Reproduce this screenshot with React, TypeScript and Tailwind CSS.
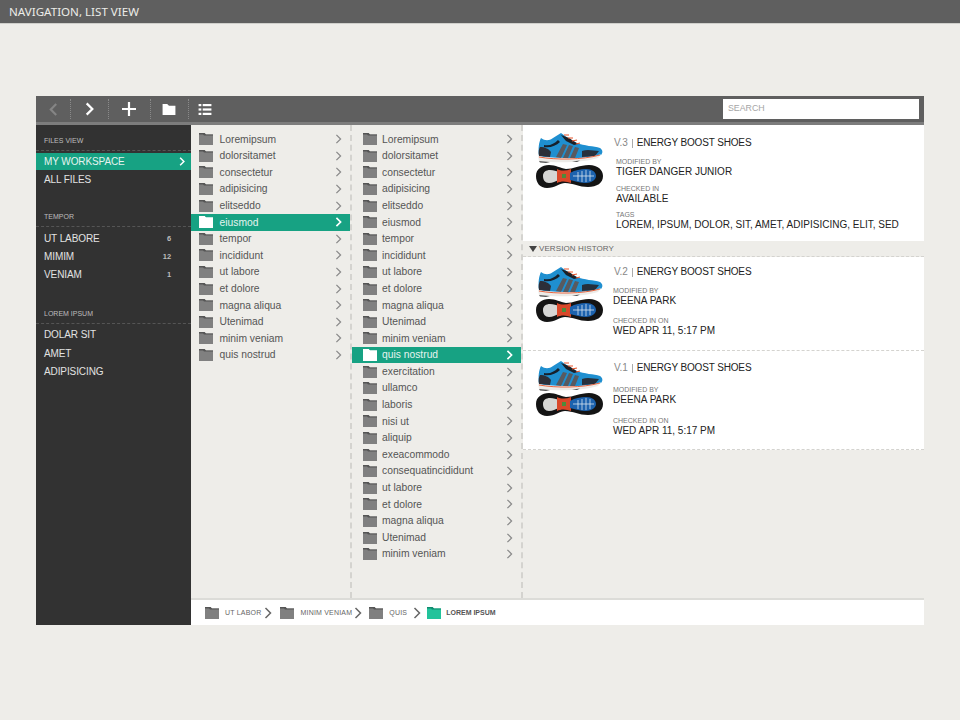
const COL_ONE = ['Loremipsum', 'dolorsitamet', 'consectetur', 'adipisicing', 'elitseddo', 'eiusmod', 'tempor', 'incididunt', 'ut labore', 'et dolore', 'magna aliqua', 'Utenimad', 'minim veniam', 'quis nostrud']
const COL_TWO = [...COL_ONE, 'exercitation', 'ullamco', 'laboris', 'nisi ut', 'aliquip', 'exeacommodo', 'consequatincididunt', 'ut labore', 'et dolore', 'magna aliqua', 'Utenimad', 'minim veniam']

function Chevron({ className, width = 2, left = false }: { className: string; width?: number; left?: boolean }) {
  return (
    <svg viewBox="0 0 8 12" className={className} fill="none" stroke="currentColor" strokeWidth={width}>
      <path d={left ? 'M6.5 1 L1.5 6 L6.5 11' : 'M1.5 1 L6.5 6 L1.5 11'} />
    </svg>
  )
}

function Folder({ body = '#808080', tab = '#555555', className = 'w-[14px] h-[12px]' }: { body?: string; tab?: string; className?: string }) {
  return (
    <svg viewBox="0 0 14 12" className={`shrink-0 ${className}`}>
      <path d="M0 0 H5.5 L7 1.5 H14 V12 H0 Z" fill={body} />
      <path d="M0 0 H5.5 L7 1.5 H14 V2.5 H5 L4 1.5 H0 Z" fill={tab} />
    </svg>
  )
}

function Shoe() {
  return (
    <svg viewBox="0 0 68 56" className="w-[68px] h-[56px] shrink-0">
      {/* side view */}
      <path d="M3 24 C2 16 3 10 5 6 C9 9 13 9 17 6 L25 1 C30 5 35 8 41 11 C48 14 58 14 64 16 C67 18 67 21 65 23 C50 27 20 27 3 24 Z" fill="#1f8fd0" />
      <path d="M3 24 C2 20 3 17 4 15 C9 15 13 17 15 20 L14 25 Z" fill="#2c2f38" />
      <path d="M8 13 C14 14 18 12 22 8 L24 10 C20 14 14 16 8 15 Z" fill="#16202c" />
      <path d="M20 25 L27 12 L31 13 L25 26 Z M27 26 L33 13 L37 14 L32 26 Z M34 26 L39 15 L43 16 L39 26 Z" fill="#585a60" />
      <path d="M25 3 L33 6 L42 12 L38 13 L30 9 Z" fill="#1d2026" />
      <path d="M28 3 L33 3 M32 6 L37 6 M36 9 L41 8 M40 12 L44 11" stroke="#e8552a" strokeWidth="1.2" />
      <path d="M46 19 C52 17 58 19 63 19 L59 24 L46 25 Z" fill="#26303c" />
      <path d="M2 24 C20 28 48 28 65 22 L62 26 C46 31 20 31 3 29 Z" fill="#ecebe8" />
      <path d="M3 25 C20 28 46 28 64 23" stroke="#e8552a" strokeWidth="0.9" fill="none" />
      <path d="M3 29 L14 30 L10 31 L4 30.5 Z M36 29.5 L44 28.5 L41 30 Z" fill="#555" />
      {/* outsole */}
      <path d="M0 44 C0 37 6 33 13 33 C20 33 24 36 30 37 C37 37 44 33 53 33 C62 33 67 38 67 44 C67 51 61 55 52 55 C43 55 37 51 29 51 C24 51 19 56 11 56 C4 56 0 51 0 44 Z" fill="#141414" />
      <path d="M7 44 C7 40 10 38 14 38 C18 38 20 39 23 40 L23 48 C19 49 17 51 13 51 C9 51 7 48 7 44 Z" fill="#d6d6d4" />
      <path d="M21 37 C25 39 30 39 35 37 L35 51 C30 49 25 49 21 51 Z" fill="#d9482a" />
      <path d="M34 41 C39 38 45 37 50 37 C56 37 60 40 60 44 C60 48 55 51 50 51 C45 51 39 49 34 48 Z" fill="#1c62ae" />
      <path d="M37 44 H58 M42 40 V49 M46 39 V50 M50 38 V50 M54 39 V49" stroke="#d8e4ef" strokeWidth="0.8" />
      <rect x="26" y="42" width="4" height="4" fill="#4f8a3a" />
    </svg>
  )
}

function SectionLabel({ text }: { text: string }) {
  return (
    <div className="h-[10px] pl-2 border-b border-dashed border-[#555] box-content pb-[4px] text-[7px] leading-[10px] text-[#bdbdbd]">
      {text}
    </div>
  )
}

function SideRow({ label, count }: { label: string; count?: string }) {
  return (
    <div className="h-[18.2px] pl-2 pr-[20px] flex items-center justify-between text-[10px] tracking-[-0.1px] text-[#e2e2e2]">
      <span>{label}</span>
      {count && <span className="text-[7.5px] font-bold text-[#bdbdbd]">{count}</span>}
    </div>
  )
}

function Sidebar() {
  return (
    <aside className="w-[155px] shrink-0 bg-[#323232] pt-[11px]">
      <SectionLabel text="FILES VIEW" />
      <div className="mt-[2px] h-[17px] bg-[#17a283] pl-2 pr-[6px] flex items-center justify-between text-[10px] tracking-[-0.1px] text-[#e6f3ef]">
        <span>MY WORKSPACE</span>
        <Chevron className="w-[6px] h-[9px] text-white" />
      </div>
      <SideRow label="ALL FILES" />
      <div className="mt-[24px]">
        <SectionLabel text="TEMPOR" />
      </div>
      <div className="mt-[2px]">
        <SideRow label="UT LABORE" count="6" />
        <SideRow label="MIMIM" count="12" />
        <SideRow label="VENIAM" count="1" />
      </div>
      <div className="mt-[25px]">
        <SectionLabel text="LOREM IPSUM" />
      </div>
      <div className="mt-[2px]">
        <SideRow label="DOLAR SIT" />
        <SideRow label="AMET" />
        <SideRow label="ADIPISICING" />
      </div>
    </aside>
  )
}

function FileColumn({ items, selected, className, rowClass, textClass }: { items: string[]; selected: number; className: string; rowClass: string; textClass: string }) {
  return (
    <div className={`shrink-0 pt-[6px] border-r-2 border-dashed border-[#d4d3cf] ${className}`}>
      {items.map((name, i) => (
        <div
          key={i}
          className={`h-[16.6px] flex items-center pr-[8px] text-[10.3px] ${rowClass} ${i === selected ? 'bg-[#17a283] text-[#e6f3ef]' : 'text-[#555]'}`}
        >
          {i === selected ? <Folder body="#ffffff" tab="#ffffff" /> : <Folder />}
          <span className={`flex-1 ${textClass}`}>{name}</span>
          <Chevron className={`w-[7px] h-[10px] ${i === selected ? 'text-white' : 'text-[#8a8a8a]'}`} width={i === selected ? 2 : 1.5} />
        </div>
      ))}
    </div>
  )
}

function Meta({ label, value, className }: { label: string; value: string; className: string }) {
  return (
    <div className={className}>
      <div className="text-[7px] leading-[9px] text-[#777]">{label}</div>
      <div className="text-[10px] leading-[12px] text-[#222]">{value}</div>
    </div>
  )
}

function Title({ version }: { version: string }) {
  return (
    <div className="flex items-center text-[10px] tracking-[-0.15px] leading-[12px] text-[#222]">
      <span className="text-[#888]">{version}</span>
      <span className="mx-[4px] h-[9px] w-px bg-[#aaa]" />
      <span>ENERGY BOOST SHOES</span>
    </div>
  )
}

function VersionCard({ version, className, textClass, modifiedClass, checkedClass }: { version: string; className: string; textClass: string; modifiedClass: string; checkedClass: string }) {
  return (
    <div className={`bg-white border-b border-dashed border-[#d4d3cf] flex pl-[13px] pt-[9px] ${className}`}>
      <Shoe />
      <div className={`ml-[10px] ${textClass}`}>
        <Title version={version} />
        <Meta label="MODIFIED BY" value="DEENA PARK" className={modifiedClass} />
        <Meta label="CHECKED IN ON" value="WED APR 11, 5:17 PM" className={checkedClass} />
      </div>
    </div>
  )
}

function Crumb({ label, last }: { label: string; last?: boolean }) {
  return (
    <div className="flex items-center">
      {last ? <Folder body="#22c39b" tab="#128a6e" /> : <Folder />}
      <span className={`pt-[2px] text-[7px] ${last ? 'ml-[5px] font-bold text-[#555]' : 'ml-[6px] tracking-[0.2px] text-[#666]'}`}>{label}</span>
    </div>
  )
}

function ToolSep() {
  return <div className="h-[20px] border-l border-dotted border-[#8a8a8a]" />
}

export default function App() {
  return (
    <div className="w-[960px] h-[720px] bg-[#eeede9] overflow-hidden" style={{ fontFamily: '"Liberation Sans", Arial, sans-serif' }}>
      <header className="h-[24px] bg-[#5f5f5f] border-b border-[#cfcfcb] pl-[9px] flex items-center text-[11.6px] text-[#ecece8] font-['Noto_Sans',sans-serif]">
        NAVIGATION, LIST VIEW
      </header>

      <div className="mx-[36px] mt-[72px] h-[529px] flex flex-col">
        <div className="h-[29px] shrink-0 bg-[#5f5f5f] border-b-[3px] border-[#7d7d7d] flex items-center">
          <div className="w-[34px] flex justify-center pl-[1px]">
            <Chevron left className="w-[9px] h-[13px] text-[#858585]" />
          </div>
          <ToolSep />
          <div className="w-[37px] flex justify-center">
            <Chevron className="w-[9px] h-[14px] text-white" />
          </div>
          <ToolSep />
          <div className="w-[41px] flex justify-center pr-[2px]">
            <svg viewBox="0 0 14 14" className="w-[14px] h-[14px]"><path d="M7 0 V14 M0 7 H14" stroke="#fff" strokeWidth="2.2" /></svg>
          </div>
          <ToolSep />
          <div className="w-[37px] flex justify-center pr-[2px]">
            <svg viewBox="0 0 14 12" className="w-[14px] h-[11px]"><path d="M0 0 H5 L7 2 H14 V12 H0 Z" fill="#fff" /></svg>
          </div>
          <ToolSep />
          <div className="w-[33px] flex justify-center pr-[2px]">
            <svg viewBox="0 0 14 12" className="w-[14px] h-[11px]" fill="#fff">
              <rect x="0" y="0" width="3" height="2.4" /><rect x="4.5" y="0" width="9.5" height="2.4" />
              <rect x="0" y="4.8" width="3" height="2.4" /><rect x="4.5" y="4.8" width="9.5" height="2.4" />
              <rect x="0" y="9.6" width="3" height="2.4" /><rect x="4.5" y="9.6" width="9.5" height="2.4" />
            </svg>
          </div>
          <div className="ml-auto mr-[5px] w-[196px] h-[20px] bg-white pl-[5px] flex items-center text-[8.8px] text-[#a5a5a5]">SEARCH</div>
        </div>

        <div className="flex-1 flex min-h-0">
          <Sidebar />
          <div className="flex-1 flex flex-col min-w-0">
            <div className="flex-1 flex min-h-0">
              <FileColumn items={COL_ONE} selected={5} className="w-[161px]" rowClass="pl-2" textClass="ml-[6.5px]" />
              <FileColumn items={COL_TWO} selected={13} className="w-[171px]" rowClass="pl-[11px]" textClass="ml-[5px]" />
              <div className="flex-1 min-w-0">
                <div className="h-[116px] bg-white flex pl-[13px] pt-[7px]">
                  <Shoe />
                  <div className="ml-[10px] mt-[5px]">
                    <Title version="V.3" />
                    <Meta label="MODIFIED BY" value="TIGER DANGER JUNIOR" className="mt-[8px] ml-[2px]" />
                    <Meta label="CHECKED IN" value="AVAILABLE" className="mt-[6px] ml-[2px]" />
                    <Meta label="TAGS" value="LOREM, IPSUM, DOLOR, SIT, AMET, ADIPISICING, ELIT, SED" className="mt-[5px] ml-[2px]" />
                  </div>
                </div>
                <div className="h-[16px] border-b border-dashed border-[#d4d3cf] pl-[6px] pt-[1px] flex items-center text-[8px] tracking-[0.1px] text-[#666]">
                  <span className="mr-[2px] w-0 h-0 border-x-[4px] border-x-transparent border-t-[6px] border-t-[#444]" />
                  VERSION HISTORY
                </div>
                <VersionCard version="V.2" className="h-[94px]" textClass="mt-0" modifiedClass="mt-[8px] -ml-px" checkedClass="mt-[9px] -ml-px" />
                <VersionCard version="V.1" className="h-[99px]" textClass="mt-[2px]" modifiedClass="mt-[11px] -ml-px" checkedClass="mt-[10px] -ml-px" />
              </div>
            </div>
            <div className="h-[27px] shrink-0 bg-white border-t-2 border-[#dcdcd8] pl-[14px] flex items-center">
              <Crumb label="UT LABOR" />
              <Chevron className="ml-[3px] w-[8px] h-[12px] text-[#666]" width={1.5} />
              <div className="ml-[8px]"><Crumb label="MINIM VENIAM" /></div>
              <Chevron className="ml-[2px] w-[8px] h-[12px] text-[#666]" width={1.5} />
              <div className="ml-[7px]"><Crumb label="QUIS" /></div>
              <Chevron className="ml-[6px] w-[8px] h-[12px] text-[#666]" width={1.5} />
              <div className="ml-[6px]"><Crumb label="LOREM IPSUM" last /></div>
            </div>
          </div>
        </div>
      </div>
    </div>
  )
}
